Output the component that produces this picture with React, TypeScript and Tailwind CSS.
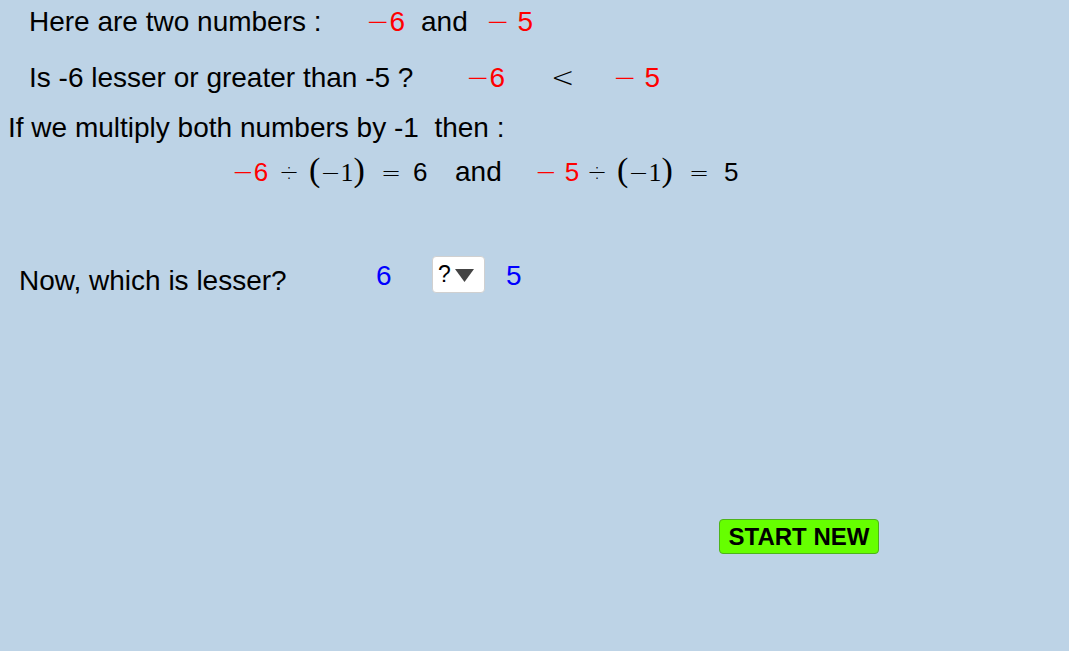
// font stacks used by the worksheet
const sans = { fontFamily: '"Liberation Sans", Arial, sans-serif' }
const serif = { fontFamily: '"Liberation Serif", "Times New Roman", serif' }
const thin = { fontFamily: '"DejaVu Sans", sans-serif', fontWeight: 200 }

const Minus = ({ spaced = false }: { spaced?: boolean }) => (
  <span style={thin} className={spaced ? "mr-[8px]" : "mr-0"}>
    −
  </span>
)

// red negative number like "−6" or "− 5"
const Neg = ({ n, spaced = false, size = "text-[28px]" }: { n: string; spaced?: boolean; size?: string }) => (
  <span className={`text-[#ff0000] ${size}`}>
    <Minus spaced={spaced} />
    <span style={sans}>{n}</span>
  </span>
)

// "(−1)" with larger parentheses
const NegOne = () => (
  <span className="text-black">
    <span style={serif} className="text-[34px]">(</span>
    <span style={thin} className="text-[24px]">−</span>
    <span style={serif} className="text-[26px]">1</span>
    <span style={serif} className="text-[34px]">)</span>
  </span>
)

const Op = ({ c }: { c: string }) => (
  <span style={thin} className="text-[24px] text-black">
    {c}
  </span>
)

export default function App() {
  return (
    <div style={sans} className="w-[1069px] h-[651px] bg-[#bdd3e6] overflow-hidden text-black flex flex-col">
      {/* line 1 */}
      <div className="flex items-baseline h-[32px] mt-[6px] pl-[29px] leading-[32px] text-[28px]">
        <span className="w-[337px] shrink-0">Here are two numbers :</span>
        <span className="w-[55px] shrink-0">
          <Neg n="6" />
        </span>
        <span className="w-[65px] shrink-0">and</span>
        <Neg n="5" spaced />
      </div>

      {/* line 2 */}
      <div className="flex items-baseline h-[32px] mt-[24px] pl-[29px] leading-[32px] text-[28px]">
        <span className="w-[437px] shrink-0">Is -6 lesser or greater than -5 ?</span>
        <span className="w-[85px] shrink-0">
          <Neg n="6" />
        </span>
        <span style={thin} className="w-[62px] shrink-0 text-[28px] leading-[32px]">
          &lt;
        </span>
        <Neg n="5" spaced />
      </div>

      {/* line 3 */}
      <div className="flex h-[32px] mt-[18px] pl-[8px] leading-[32px] text-[28px] whitespace-pre">
        <span>If we multiply both numbers by -1  then :</span>
      </div>

      {/* line 4 */}
      <div className="flex items-baseline h-[40px] mt-[6px] pl-[232px] leading-[40px] text-[24px]">
        <span className="w-[47px] shrink-0">
          <Neg n="6" size="text-[26px]" />
        </span>
        <span className="w-[30px] shrink-0">
          <Op c="÷" />
        </span>
        <span className="w-[72px] shrink-0">
          <NegOne />
        </span>
        <span className="w-[32px] shrink-0">
          <Op c="=" />
        </span>
        <span className="w-[42px] shrink-0 text-[26px]">6</span>
        <span className="w-[80px] shrink-0 text-[28px]">and</span>
        <span className="w-[52px] shrink-0">
          <Neg n="5" spaced size="text-[26px]" />
        </span>
        <span className="w-[30px] shrink-0">
          <Op c="÷" />
        </span>
        <span className="w-[72px] shrink-0">
          <NegOne />
        </span>
        <span className="w-[35px] shrink-0">
          <Op c="=" />
        </span>
        <span className="text-[26px]">5</span>
      </div>

      {/* line 5 */}
      <div className="flex items-start mt-[65px] pl-[19px] h-[40px] text-[28px] leading-[32px]">
        <span className="w-[357px] shrink-0 mt-[10px]">Now, which is lesser?</span>
        <span className="w-[56px] shrink-0 mt-[5px] text-[#0000ff]">6</span>
        <div className="w-[53px] h-[37px] mt-[1px] shrink-0 bg-white border border-[#d0d0d0] rounded-[4px] flex items-center pl-[5px]">
          <span className="text-[23px] leading-none">?</span>
          <svg width="19" height="13" viewBox="0 0 19 13" className="ml-[4px] mt-[2px]">
            <polygon points="0,0 19,0 9.5,13" fill="#444" />
          </svg>
        </div>
        <span className="ml-[21px] mt-[5px] text-[#0000ff]">5</span>
      </div>

      {/* restart button */}
      <div className="flex mt-[224px] pl-[719px]">
        <button className="w-[160px] h-[35px] bg-[#66ff00] border border-[#4db31a] rounded-[4px] flex items-center justify-center text-[24px] font-bold leading-none">
          START NEW
        </button>
      </div>
    </div>
  )
}
